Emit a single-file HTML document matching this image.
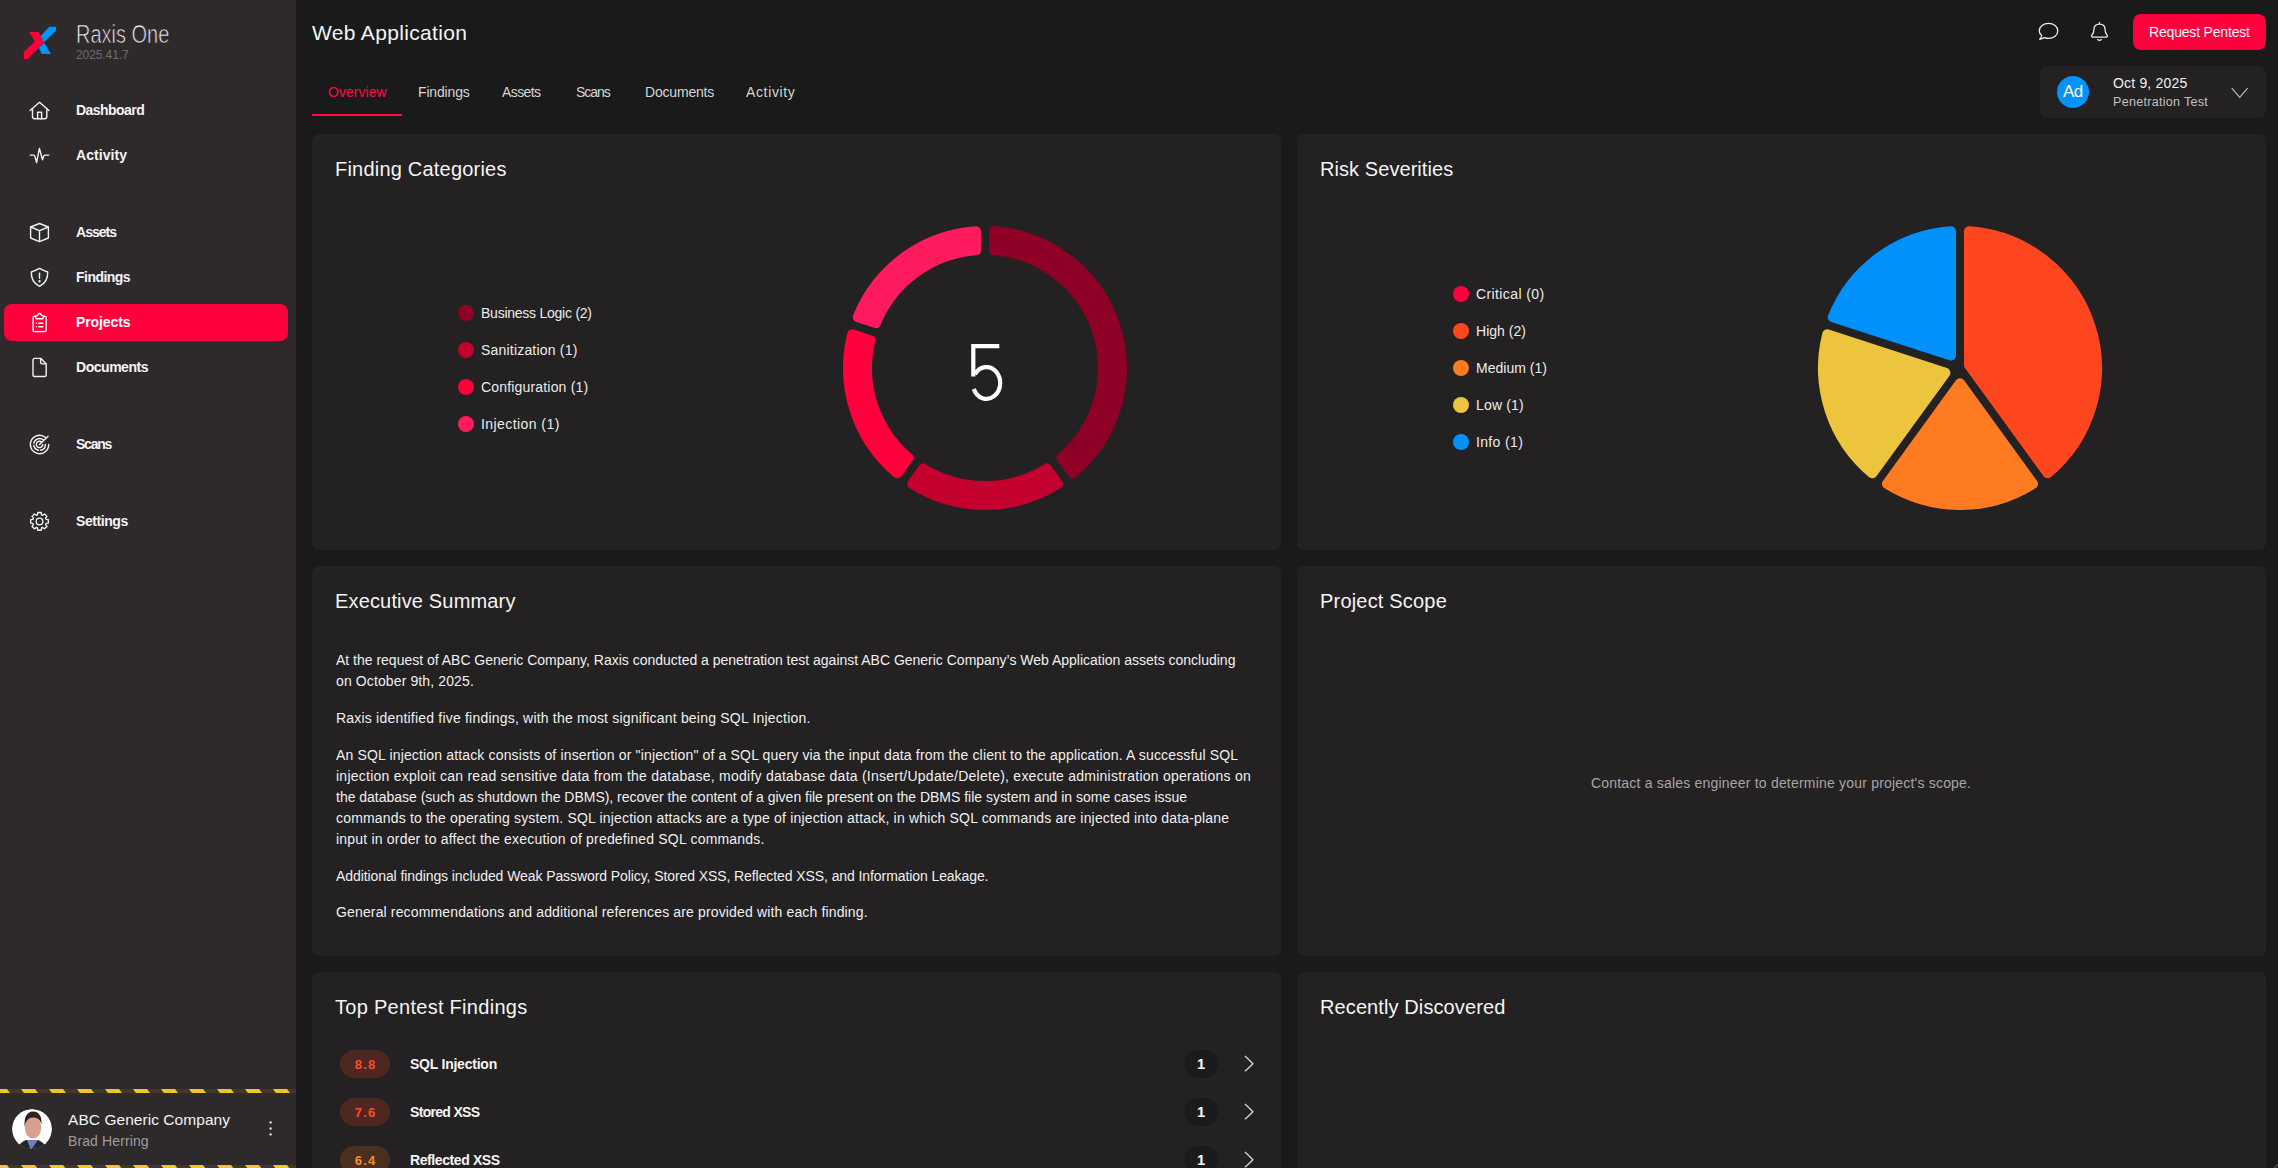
<!DOCTYPE html>
<html><head><meta charset="utf-8">
<style>
*{margin:0;padding:0;box-sizing:border-box}
html,body{width:2278px;height:1168px;overflow:hidden;background:#1a1a1a;font-family:"Liberation Sans",sans-serif;color:#f2f2f2}
.a{position:absolute;white-space:nowrap;line-height:1}
#side{position:absolute;left:0;top:0;width:296px;height:1168px;background:#2e2a2c}
.nav{font-size:14px;font-weight:bold;color:#f4f4f4;left:76px}
.ico{position:absolute;left:29px;width:21px;height:21px}
.card{position:absolute;background:#232122;border-radius:7px}
.ttl{font-size:20px;color:#f4f4f4}
.leg{font-size:14px;color:#ececec}
.dot{position:absolute;width:16px;height:16px;border-radius:50%}
.tab{font-size:14px;color:#d6d6d6;top:85px}
.pl{left:336px;font-size:14px;color:#f0f0f0}
.pill{position:absolute;left:340px;width:50px;height:28px;border-radius:14px;font-size:13px;font-weight:bold;line-height:30px;text-align:center;letter-spacing:1.3px;text-indent:1.3px}
.cnt{position:absolute;left:1184px;width:34px;height:28px;border-radius:14px;background:#1b1b1b;font-size:14.5px;font-weight:bold;line-height:29px;text-align:center;color:#fff}
.fname{font-size:14px;font-weight:bold;color:#f4f4f4;left:410px}
</style></head>
<body>
<div id="side">
  <!-- logo -->
  <svg class="a" style="left:0;top:0" width="80" height="80" viewBox="0 0 80 80">
    <polygon fill="#ff003c" points="29.2,31.9 38.6,31.9 44.2,42.2 27.9,59 23.8,59 23.8,52.1 34.9,41.4"/>
    <polygon fill="#0094ff" points="49.3,26.8 56.1,26.8 56.1,30.7 44.2,42.2 40.7,36"/>
    <polygon fill="#0094ff" points="44.2,42.8 50.9,53.9 41.9,53.9 38.8,47.9"/>
  </svg>
  <div class="a" style="left:76px;top:21.9px;font-size:25px;color:#ececec;transform:scaleX(0.8);transform-origin:0 0;-webkit-text-stroke:0.7px #2e2a2c">Raxis One</div>
  <div class="a" style="letter-spacing:-0.086px;left:76px;top:48.8px;font-size:12px;color:#6e6b6c">2025.41.7</div>

  <div style="position:absolute;left:4px;top:304px;width:284px;height:37px;border-radius:8px;background:#ff003c"></div>
  <svg class="a" style="left:0;top:0" width="296" height="1168" viewBox="0 0 296 1168" fill="none" stroke="#f2f2f2" stroke-width="1.4" stroke-linecap="round" stroke-linejoin="round">
    <!-- house -->
    <path d="M30.1,110.6 L39.5,102.2 L48.9,110.6"/>
    <path d="M32.5,108.6 V116.6 Q32.5,118.8 34.7,118.8 H44.6 Q46.8,118.8 46.8,116.6 V108.6"/>
    <path d="M37.6,118.8 V112.2 H41.6 V118.8"/>
    <!-- activity -->
    <path d="M30.2,155.1 H33.6 Q34.6,155.1 35.1,157 L36.6,162.6 L39.4,148.4 L42.5,159.8 L43.6,156.2 Q44,155.1 45.2,155.1 H48.8"/>
    <!-- cube -->
    <path d="M39.5,223.5 L48.4,227 V238 L39.5,241.6 L30.6,238 V227 Z"/>
    <path d="M30.6,227 L39.5,230.6 L48.4,227 M39.5,230.6 V241.6"/>
    <!-- shield -->
    <path d="M39.5,268.4 C36.5,270 33.5,271.3 31.3,272 C31,279.5 34,283.6 39.5,286.4 C45,283.6 48,279.5 47.7,272 C45.5,271.3 42.5,270 39.5,268.4 Z"/>
    <path d="M39.5,273.3 V278.3"/>
    <circle cx="39.5" cy="281.3" r="0.5" fill="#f2f2f2"/>
    <!-- clipboard -->
    <path stroke="#fff" d="M35.2,316.4 H34.4 Q33.1,316.4 33.1,317.8 V330.2 Q33.1,331.6 34.5,331.6 H44.8 Q46.2,331.6 46.2,330.2 V317.8 Q46.2,316.4 44.9,316.4 H43.9"/>
    <path stroke="#fff" d="M35.2,316 L36.2,318.7 H42.9 L43.9,316 Q42.5,316 41.7,315.3 L40.4,313.7 Q39.6,312.9 38.8,313.7 L37.5,315.3 Q36.7,316 35.2,316 Z"/>
    <path stroke="#fff" d="M36.5,323.3 V323.4 M36.5,326.7 V326.8 M38.9,323.3 H42.9 M38.9,326.7 H42.9"/>
    <!-- file -->
    <path d="M33,360.2 Q33,358.4 34.8,358.4 H41 L46.2,363.9 V374.7 Q46.2,376.5 44.4,376.5 H34.8 Q33,376.5 33,374.7 Z"/>
    <path d="M40.6,358.6 V362.1 Q40.6,363.9 42.4,363.9 H46"/>
    <!-- radar -->
    <path d="M48.7,444.4 A9.2,9.2 0 1 1 45.6,437.6"/>
    <path d="M45.4,444.4 A5.9,5.9 0 0 1 40.5,450.2 M38.5,450.2 A5.9,5.9 0 0 1 33.8,445.5 M33.8,443.2 A5.9,5.9 0 0 1 43.5,440"/>
    <path d="M42.7,444.4 A3.2,3.2 0 1 1 41.6,442"/>
    <path d="M39.5,444.4 L48.1,436.2"/>
    <!-- gear -->
    <path d="M37.48,514.80 L37.78,512.57 L41.22,512.57 L41.52,514.80 L42.74,515.31 L44.53,513.94 L46.96,516.37 L45.59,518.16 L46.10,519.38 L48.33,519.68 L48.33,523.12 L46.10,523.42 L45.59,524.64 L46.96,526.43 L44.53,528.86 L42.74,527.49 L41.52,528.00 L41.22,530.23 L37.78,530.23 L37.48,528.00 L36.26,527.49 L34.47,528.86 L32.04,526.43 L33.41,524.64 L32.90,523.42 L30.67,523.12 L30.67,519.68 L32.90,519.38 L33.41,518.16 L32.04,516.37 L34.47,513.94 L36.26,515.31 Z"/>
    <circle cx="39.5" cy="521.4" r="3.3"/>
    <!-- kebab -->
    <circle cx="270.6" cy="1122.4" r="1.2" fill="#e0e0e0" stroke="none"/>
    <circle cx="270.6" cy="1128.5" r="1.2" fill="#e0e0e0" stroke="none"/>
    <circle cx="270.6" cy="1134.4" r="1.2" fill="#e0e0e0" stroke="none"/>
    <!-- avatar -->
    <defs><clipPath id="av"><circle cx="32" cy="1129" r="20"/></clipPath></defs>
    <g clip-path="url(#av)" stroke="none">
      <circle cx="32" cy="1129" r="20" fill="#ffffff"/>
      <path d="M16,1152 Q18,1143 26,1140 L38,1140 Q46,1143 48,1152 Z" fill="#26262a"/>
      <path d="M27,1140 L31,1150 L38,1140 Z" fill="#6a7fbf"/>
      <ellipse cx="33" cy="1127.5" rx="8.2" ry="10.8" fill="#d8a08e"/>
      <path d="M24.6,1127 Q23.5,1112 33,1111.5 Q42.5,1112 41.4,1125 Q40.5,1117.5 33,1117.5 Q26,1117.5 24.6,1127 Z" fill="#2e211c"/>
    </g>
  </svg>
  <div class="a nav" style="letter-spacing:-0.553px;top:103px">Dashboard</div>
  <div class="a nav" style="letter-spacing:0.060px;top:148px">Activity</div>
  <div class="a nav" style="letter-spacing:-0.964px;top:225px">Assets</div>
  <div class="a nav" style="letter-spacing:-0.533px;top:270px">Findings</div>
  <div class="a nav" style="letter-spacing:-0.093px;top:315px;color:#fff">Projects</div>
  <div class="a nav" style="letter-spacing:-0.467px;top:360px">Documents</div>
  <div class="a nav" style="letter-spacing:-1.213px;top:437px">Scans</div>
  <div class="a nav" style="letter-spacing:-0.433px;top:514px">Settings</div>

  <!-- footer -->
  <svg class="a" style="left:0;top:1089px" width="296" height="4" viewBox="0 0 296 4"><defs><pattern id="hz" x="-7" y="0" width="28" height="4" patternUnits="userSpaceOnUse"><rect width="28" height="4" fill="#42382a"/><polygon points="0,0 14,0 17,4 3,4" fill="#f0c42e"/><polygon points="28,0 42,0 45,4 31,4" fill="#f0c42e"/></pattern></defs><rect width="296" height="4" fill="url(#hz)"/></svg>
  <svg class="a" style="left:0;top:1165px" width="296" height="4" viewBox="0 0 296 4"><rect width="296" height="4" fill="url(#hz)"/></svg>
  <div class="a" style="letter-spacing:0.050px;left:68px;top:1111.7px;font-size:15.5px;color:#f2f2f2">ABC Generic Company</div>
  <div class="a" style="letter-spacing:0.111px;left:68px;top:1134px;font-size:14px;color:#a09c9d">Brad Herring</div>
</div>

<!-- header -->
<div class="a" style="letter-spacing:0.334px;left:312px;top:22.1px;font-size:21px;color:#f4f4f4">Web Application</div>
<div class="a tab" style="letter-spacing:0.049px;left:328px;color:#ff0a46">Overview</div>
<div style="position:absolute;left:312px;top:114px;width:90px;height:2px;background:#ff0a46"></div>
<div class="a tab" style="letter-spacing:-0.160px;left:418px">Findings</div>
<div class="a tab" style="letter-spacing:-0.603px;left:502px">Assets</div>
<div class="a tab" style="letter-spacing:-1.030px;left:576px">Scans</div>
<div class="a tab" style="letter-spacing:-0.189px;left:645px">Documents</div>
<div class="a tab" style="letter-spacing:0.637px;left:746px">Activity</div>

<div style="position:absolute;left:2133px;top:14px;width:133px;height:36px;border-radius:8px;background:#ff003c"></div>
<div class="a" style="letter-spacing:-0.180px;left:2149px;top:25.4px;font-size:14px;color:#fff;">Request Pentest</div>

<div style="position:absolute;left:2040px;top:66px;width:226px;height:52px;border-radius:8px;background:#232122"></div>
<div style="position:absolute;left:2057px;top:76px;width:32px;height:32px;border-radius:50%;background:#0393fa"></div>
<div class="a" style="left:2063px;top:82.6px;font-size:17px;color:#fff;letter-spacing:-0.5px">Ad</div>
<div class="a" style="letter-spacing:0.181px;left:2113px;top:76px;font-size:14px;color:#f0f0f0">Oct 9, 2025</div>
<div class="a" style="letter-spacing:0.313px;left:2113px;top:96.2px;font-size:12.5px;color:#c4c0c1">Penetration Test</div>
<svg class="a" style="left:2000px;top:0" width="278" height="130" viewBox="2000 0 278 130" fill="none" stroke="#ececec" stroke-width="1.3" stroke-linecap="round" stroke-linejoin="round">
  <path d="M2041.6,35.2 C2039.2,33.5 2039.3,31.5 2039.3,30.8 C2039.3,26.5 2043.5,23.4 2048.6,23.4 C2053.7,23.4 2057.8,26.7 2057.8,30.9 C2057.8,35.1 2053.7,38.4 2048.6,38.4 C2047.3,38.4 2046,38.2 2044.6,37.6 L2039.7,39.3 C2041.4,37.9 2041.9,36.5 2041.6,35.2 Z"/>
  <path d="M2099.5,22.6 V24.2 M2092.4,37.1 Q2090.9,36.4 2092.2,34.7 Q2093.9,32.6 2093.9,29.8 Q2093.9,24.2 2099.5,24.2 Q2105.1,24.2 2105.1,29.8 Q2105.1,32.6 2106.8,34.7 Q2108.1,36.4 2106.6,37.1 Z"/>
  <path d="M2097.6,39.6 Q2099.5,41.2 2101.4,39.6"/>
  <path stroke="#b8b8b8" stroke-width="1.2" d="M2232,88.4 L2239.7,97.3 L2247.4,88.4"/>
</svg>

<!-- cards -->
<div class="card" style="left:312px;top:134px;width:969px;height:416px"></div>
<div class="card" style="left:1297px;top:134px;width:969px;height:416px"></div>
<div class="card" style="left:312px;top:566px;width:969px;height:390px"></div>
<div class="card" style="left:1297px;top:566px;width:969px;height:390px"></div>
<div class="card" style="left:312px;top:972px;width:969px;height:220px"></div>
<div class="card" style="left:1297px;top:972px;width:969px;height:220px"></div>

<div class="a ttl" style="letter-spacing:0.207px;left:335px;top:159.2px">Finding Categories</div>
<div class="a ttl" style="letter-spacing:0.067px;left:1320px;top:159.2px">Risk Severities</div>
<div class="a ttl" style="letter-spacing:0.160px;left:335px;top:591.1px">Executive Summary</div>
<div class="a ttl" style="letter-spacing:0.190px;left:1320px;top:591.1px">Project Scope</div>
<div class="a ttl" style="letter-spacing:0.285px;left:335px;top:997.1px">Top Pentest Findings</div>
<div class="a ttl" style="letter-spacing:0.104px;left:1320px;top:997.1px">Recently Discovered</div>

<!-- legends -->
<div class="dot" style="left:458px;top:305px;background:#8f0027"></div>
<div class="a leg" style="letter-spacing:-0.245px;left:481px;top:305.8px">Business Logic (2)</div>
<div class="dot" style="left:458px;top:342px;background:#c4002f"></div>
<div class="a leg" style="letter-spacing:0.194px;left:481px;top:342.8px">Sanitization (1)</div>
<div class="dot" style="left:458px;top:379px;background:#ff003c"></div>
<div class="a leg" style="letter-spacing:0.176px;left:481px;top:379.8px">Configuration (1)</div>
<div class="dot" style="left:458px;top:416px;background:#ff1b5e"></div>
<div class="a leg" style="letter-spacing:0.429px;left:481px;top:416.8px">Injection (1)</div>

<div class="dot" style="left:1453px;top:286px;background:#ff003c"></div>
<div class="a leg" style="letter-spacing:0.393px;left:1476px;top:287.4px">Critical (0)</div>
<div class="dot" style="left:1453px;top:323px;background:#ff461e"></div>
<div class="a leg" style="letter-spacing:0.029px;left:1476px;top:324.4px">High (2)</div>
<div class="dot" style="left:1453px;top:360px;background:#ff7b22"></div>
<div class="a leg" style="letter-spacing:0.023px;left:1476px;top:361.4px">Medium (1)</div>
<div class="dot" style="left:1453px;top:397px;background:#ecc43e"></div>
<div class="a leg" style="letter-spacing:0.169px;left:1476px;top:398.4px">Low (1)</div>
<div class="dot" style="left:1453px;top:434px;background:#0091fb"></div>
<div class="a leg" style="letter-spacing:0.349px;left:1476px;top:435.4px">Info (1)</div>

<!-- charts -->
<svg class="a" style="left:0;top:0" width="2278" height="1168" viewBox="0 0 2278 1168">
<path fill="#8f0027" stroke="#8f0027" stroke-width="10" stroke-linejoin="round" d="M994.00,231.30 A137.00,137.00 0 0 1 1072.63,473.31 L1061.44,457.90 A118.00,118.00 0 0 0 994.00,250.34 Z"/>
<path fill="#c4002f" stroke="#c4002f" stroke-width="10" stroke-linejoin="round" d="M1058.07,483.89 A137.00,137.00 0 0 1 911.93,483.89 L923.12,468.48 A118.00,118.00 0 0 0 1046.88,468.48 Z"/>
<path fill="#ff003c" stroke="#ff003c" stroke-width="10" stroke-linejoin="round" d="M897.37,473.31 A137.00,137.00 0 0 1 852.21,334.32 L870.32,340.20 A118.00,118.00 0 0 0 908.56,457.90 Z"/>
<path fill="#ff1b5e" stroke="#ff1b5e" stroke-width="10" stroke-linejoin="round" d="M857.77,317.20 A137.00,137.00 0 0 1 976.00,231.30 L976.00,250.34 A118.00,118.00 0 0 0 875.88,323.08 Z"/>
<path fill="none" stroke="#fff" stroke-width="4.2" d="M999.3,346.1 H973.3 V376.5"/>
<path fill="none" stroke="#fff" stroke-width="4.2" d="M975.0,374.3 A13.7,15.9 0 1 1 973.8,389.0"/>
<path fill="#ff461e" stroke="#ff461e" stroke-width="10" stroke-linejoin="round" d="M1969.00,231.30 A137.00,137.00 0 0 1 2047.63,473.31 L1969.00,365.08 Z"/>
<path fill="#ff7b22" stroke="#ff7b22" stroke-width="10" stroke-linejoin="round" d="M2033.07,483.89 A137.00,137.00 0 0 1 1886.93,483.89 L1960.00,383.31 Z"/>
<path fill="#ecc43e" stroke="#ecc43e" stroke-width="10" stroke-linejoin="round" d="M1872.37,473.31 A137.00,137.00 0 0 1 1827.21,334.32 L1945.44,372.73 Z"/>
<path fill="#0091fb" stroke="#0091fb" stroke-width="10" stroke-linejoin="round" d="M1832.77,317.20 A137.00,137.00 0 0 1 1951.00,231.30 L1951.00,355.61 Z"/>
</svg>

<!-- executive summary -->
<div class="a pl" style="letter-spacing:-0.007px;top:653.0px">At the request of ABC Generic Company, Raxis conducted a penetration test against ABC Generic Company’s Web Application assets concluding</div>
<div class="a pl" style="letter-spacing:0.118px;top:674.0px">on October 9th, 2025.</div>
<div class="a pl" style="letter-spacing:0.204px;top:710.8px">Raxis identified five findings, with the most significant being SQL Injection.</div>
<div class="a pl" style="letter-spacing:0.153px;top:747.6px">An SQL injection attack consists of insertion or "injection" of a SQL query via the input data from the client to the application. A successful SQL</div>
<div class="a pl" style="letter-spacing:0.245px;top:768.6px">injection exploit can read sensitive data from the database, modify database data (Insert/Update/Delete), execute administration operations on</div>
<div class="a pl" style="letter-spacing:-0.014px;top:789.6px">the database (such as shutdown the DBMS), recover the content of a given file present on the DBMS file system and in some cases issue</div>
<div class="a pl" style="letter-spacing:0.170px;top:810.6px">commands to the operating system. SQL injection attacks are a type of injection attack, in which SQL commands are injected into data-plane</div>
<div class="a pl" style="letter-spacing:0.197px;top:831.6px">input in order to affect the execution of predefined SQL commands.</div>
<div class="a pl" style="letter-spacing:-0.084px;top:868.7px">Additional findings included Weak Password Policy, Stored XSS, Reflected XSS, and Information Leakage.</div>
<div class="a pl" style="letter-spacing:0.147px;top:905.4px">General recommendations and additional references are provided with each finding.</div>

<div class="a" style="letter-spacing:0.199px;left:1591px;top:776.2px;font-size:14px;color:#a8a4a5;">Contact a sales engineer to determine your project's scope.</div>

<!-- findings -->
<div class="pill" style="top:1050px;background:#4e2622;color:#ff4a24">8.8</div>
<div class="a fname" style="letter-spacing:-0.232px;top:1056.7px">SQL Injection</div>
<div class="cnt" style="top:1050px">1</div>
<div class="pill" style="top:1098px;background:#4e2622;color:#ff4a24">7.6</div>
<div class="a fname" style="letter-spacing:-0.683px;top:1104.7px">Stored XSS</div>
<div class="cnt" style="top:1098px">1</div>
<div class="pill" style="top:1146px;background:#4b3020;color:#ff8a24">6.4</div>
<div class="a fname" style="letter-spacing:-0.403px;top:1152.7px">Reflected XSS</div>
<div class="cnt" style="top:1146px">1</div>
<svg class="a" style="left:1230px;top:1040px" width="40" height="128" viewBox="1230 1040 40 128" fill="none" stroke="#d8d8d8" stroke-width="1.3" stroke-linecap="butt" stroke-linejoin="round">
  <path d="M1245,1056 L1253,1063.7 L1245,1071.3"/>
  <path d="M1245,1104 L1253,1111.7 L1245,1119.3"/>
  <path d="M1245,1152 L1253,1159.7 L1245,1167.3"/>
</svg>

<svg class="a" style="left:2266px;top:1156px" width="12" height="12" viewBox="0 0 12 12"><path d="M12,8.5 L8.5,12" stroke="#5a5a5a" stroke-width="1.2"/></svg>
</body></html>
